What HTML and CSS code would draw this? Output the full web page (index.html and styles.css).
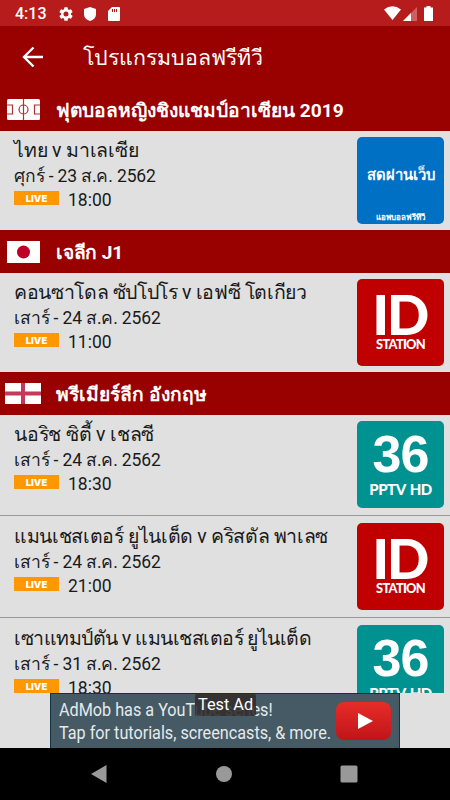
FILE: index.html
```html
<!DOCTYPE html>
<html lang="th">
<head>
<meta charset="utf-8">
<title>โปรแกรมบอลฟรีทีวี</title>
<link rel="stylesheet" href="styles.css">
</head>
<body>
<div class="screen">
  <header class="status">
    <span class="clock">4:13</span>
    <svg class="gear" viewBox="2 2 20 20"><path fill="#fff" d="M19.14 12.94c.04-.3.06-.61.06-.94s-.02-.64-.07-.94l2.03-1.58a.5.5 0 0 0 .12-.61l-1.92-3.32a.5.5 0 0 0-.59-.22l-2.39.96a7 7 0 0 0-1.62-.94l-.36-2.54a.5.5 0 0 0-.48-.41h-3.84a.5.5 0 0 0-.47.41l-.36 2.54a7 7 0 0 0-1.62.94l-2.39-.96a.5.5 0 0 0-.59.22L2.74 8.87a.5.5 0 0 0 .12.61l2.03 1.58a6 6 0 0 0 0 1.88l-2.03 1.58a.5.5 0 0 0-.12.61l1.92 3.32c.12.22.37.29.59.22l2.39-.96c.5.38 1.03.7 1.62.94l.36 2.54c.05.24.24.41.48.41h3.84c.24 0 .44-.17.47-.41l.36-2.54a7 7 0 0 0 1.62-.94l2.39.96c.22.08.47 0 .59-.22l1.92-3.32a.5.5 0 0 0-.12-.61zM12 15.6a3.6 3.6 0 1 1 0-7.2 3.6 3.6 0 0 1 0 7.2z"/></svg>
    <svg class="shield" viewBox="0 0 12 14"><path fill="#fff" d="M6 0l6 2v5c0 3.500-2.500 6-6 7-3.500-1-6-3.500-6-7V2z"/></svg>
    <svg class="sd" viewBox="0 0 12 14"><path fill="#fff" d="M4 0h7a1 1 0 0 1 1 1v12a1 1 0 0 1-1 1H1a1 1 0 0 1-1-1V4z"/><path stroke="#b71c1c" stroke-width="1" d="M4.500 2v3M6.500 2v3M8.500 2v3"/></svg>
    <svg class="signals" viewBox="0 0 50 15"><path fill="#fff" d="M0 3.500Q8.500-2.800 17 3.500L8.500 14z"/><path fill="#fff" fill-opacity=".3" d="M19 15L33 1v14z"/><path fill="#fff" d="M19 15l8-8v8z"/><path fill="#fff" d="M42.500 0h4v1.500H49V15h-9V1.500h2.500z"/></svg>
  </header>
  <nav class="appbar">
    <svg class="back" viewBox="0 0 22 22"><path d="M21 11H2M11.500 1.500L2 11l9.500 9.500" fill="none" stroke="#fff" stroke-width="2.400"/></svg>
    <h1>โปรแกรมบอลฟรีทีวี</h1>
  </nav>
  <main class="list">
    <h2 class="league"><svg class="flag pitch" viewBox="0 0 33 21"><rect width="33" height="21" rx="1.500" fill="#fff"/><g fill="none" stroke="#a33" stroke-width="1.200"><path d="M16.500 0v21M0 6h5.500v9H0M33 6h-5.500v9H33"/><circle cx="16.500" cy="10.500" r="4.500"/></g></svg><span class="l1">ฟุตบอลหญิงชิงแชมป์อาเซียน 2019</span></h2>
    <article class="match"><div class="info"><h3 class="t1">ไทย v มาเลเซีย</h3><p class="date">ศุกร์ - 23 ส.ค. 2562</p><p class="time"><b class="live">LIVE</b>18:00</p></div><div class="tv web"><b>สดผ่านเว็บ</b><small>แอพบอลฟรีทีวี</small></div></article>

    <h2 class="league"><svg class="flag" viewBox="0 0 33 22"><rect width="33" height="22" fill="#fff"/><circle cx="16.500" cy="11" r="6.500" fill="#be0029"/></svg><span class="l2">เจลีก J1</span></h2>
    <article class="match"><div class="info"><h3 class="t2">คอนซาโดล ซัปโปโร v เอฟซี โตเกียว</h3><p class="date">เสาร์ - 24 ส.ค. 2562</p><p class="time"><b class="live">LIVE</b>11:00</p></div><div class="tv id"><b>ID</b><small>STATION</small></div></article>

    <h2 class="league"><svg class="flag england" viewBox="0 0 36 21"><rect width="36" height="21" fill="#fff"/><path d="M18 0v21M0 10.500h36" stroke="#c8385a" stroke-width="4"/></svg><span class="l3">พรีเมียร์ลีก อังกฤษ</span></h2>
    <article class="match ruled"><div class="info"><h3 class="t3">นอริช ซิตี้ v เชลซี</h3><p class="date">เสาร์ - 24 ส.ค. 2562</p><p class="time"><b class="live">LIVE</b>18:30</p></div><div class="tv pptv"><b>36</b><small>PPTV HD</small></div></article>
    <article class="match ruled"><div class="info"><h3 class="t4">แมนเชสเตอร์ ยูไนเต็ด v คริสตัล พาเลซ</h3><p class="date">เสาร์ - 24 ส.ค. 2562</p><p class="time"><b class="live">LIVE</b>21:00</p></div><div class="tv id"><b>ID</b><small>STATION</small></div></article>
    <article class="match"><div class="info"><h3 class="t5">เซาแทมป์ตัน v แมนเชสเตอร์ ยูไนเต็ด</h3><p class="date">เสาร์ - 31 ส.ค. 2562</p><p class="time"><b class="live">LIVE</b>18:30</p></div><div class="tv pptv"><b>36</b><small>PPTV HD</small></div></article>
  </main>
  <aside class="adbar">
    <div class="ad">
      <p>AdMob has a YouTube series!<br>Tap for tutorials, screencasts, &amp; more.</p>
      <svg class="play" viewBox="0 0 55 38"><defs><linearGradient id="red" x2="0" y2="1"><stop stop-color="#e62d28"/><stop offset="1" stop-color="#c01419"/></linearGradient></defs><rect width="55" height="38" rx="8" fill="url(#red)"/><path fill="#fff" d="M22 11v16l15-8z"/></svg>
      <span class="tag">Test Ad</span>
    </div>
  </aside>
  <footer class="navbar">
    <svg viewBox="0 0 18 18"><path d="M16.500 0v18L1 9z"/></svg>
    <svg viewBox="0 0 18 18"><circle cx="9" cy="9" r="8"/></svg>
    <svg viewBox="0 0 18 18"><rect x=".5" y=".5" width="17" height="17" rx="1.500"/></svg>
  </footer>
</div>
</body>
</html>
```
FILE: styles.css
```css
* { box-sizing: border-box; margin: 0; padding: 0; }
body { width: 450px; height: 800px; overflow: hidden; font-family: Roboto, sans-serif; color: #1a1a1a; background: #000; }
svg { display: block; flex: none; }
.screen { display: flex; flex-direction: column; height: 800px; }
.status { height: 26px; background: #b71c1c; display: flex; align-items: center; padding: 1px 16px 0 15px; flex: none; }
.clock { color: #fff; font-size: 16px; font-weight: 500; line-height: 26px; width: 44px; white-space: nowrap; }
.gear { width: 14px; height: 14px; }
.shield { width: 12px; height: 14px; margin-left: 11px; }
.sd { width: 12px; height: 14px; margin-left: 12px; }
.signals { width: 50px; height: 15px; margin-left: auto; }
.appbar { height: 62px; background: #900; color: #fff; display: flex; align-items: center; padding-left: 22px; flex: none; }
.back { width: 22px; height: 22px; }
h1 { margin: 1px 0 0 39px; font-size: 21.4px; font-weight: 400; line-height: 30px; white-space: nowrap; }
.list { flex: 1; min-height: 0; overflow: hidden; background: #e0e0e0; }
.league { height: 43px; background: #900; color: #fff; display: grid; grid-template-columns: 46px 1fr; justify-items: center; align-items: center; font-size: 19.2px; font-weight: 700; line-height: 26px; white-space: nowrap; }
.league span { justify-self: start; margin: 2px 0 0 10px; }
.league .l2 { letter-spacing: -.2px; }
.flag { width: 33px; height: 22px; }
.pitch { height: 21px; }
.england { width: 36px; height: 21px; }
.match { height: 99px; display: flex; padding: 6px 6px 0 14px; }
.ruled { height: 102px; background: linear-gradient(#999, #999) 0 100px / 100% 1px no-repeat; }
.info { flex: 1; min-width: 0; }
h3 { font-size: 19.5px; font-weight: 400; line-height: 27px; height: 27px; white-space: nowrap; }
.t1 { letter-spacing: -.2px; }
.t2 { letter-spacing: -.35px; }
.t5 { letter-spacing: -.5px; }
.t3 { letter-spacing: -.2px; }
.t4 { letter-spacing: -.35px; }
.date { font-size: 17.5px; line-height: 24px; height: 24px; white-space: nowrap; letter-spacing: -.15px; }
.time { font-size: 17.5px; line-height: 24px; display: flex; }
.live { width: 45px; height: 14px; margin: 3px 9px 0 0; background: #ff9800; color: #fff; font: 900 9.500px/15px Inter, sans-serif; text-align: center; }
.tv { width: 87px; height: 87px; border-radius: 5px; color: #fff; display: flex; flex-direction: column; align-items: center; flex: none; white-space: nowrap; overflow: hidden; }
.web { background: #0070c4; }
.web b { font-size: 14.8px; line-height: 22px; margin-top: 27px; }
.web small { font-size: 8px; font-weight: 700; line-height: 12px; margin-top: 26px; }
.id { background: #c00000; }
.id b { font: 900 56px/56px Lato, sans-serif; letter-spacing: -2.500px; margin: 7px 0 0 -2px; }
.id small { font: 900 12.8px/14px Lato, sans-serif; letter-spacing: -.7px; margin-top: -5px; }
.pptv { background: #009290; }
.pptv b { font: 700 52px/52px "Liberation Sans", sans-serif; letter-spacing: -1px; margin-top: 7px; }
.pptv small { font: 900 15px/18px Lato, sans-serif; letter-spacing: -.5px; word-spacing: 1.500px; }
.adbar { height: 55px; background: #e0e0e0; display: flex; justify-content: center; flex: none; }
.ad { position: relative; width: 350px; height: 55px; background: #455a64; border: 1px solid #0e3446; border-bottom: 0; color: #e6eaec; display: flex; justify-content: space-between; align-items: center; padding: 0 8px; }
.ad p { font-size: 18px; line-height: 23px; width: 272px; white-space: nowrap; transform: scaleX(.9); transform-origin: 0 50%; }
.play { width: 55px; height: 38px; }
.tag { position: absolute; left: 144px; top: 0; height: 22px; padding: 0 3px; background: rgba(50, 45, 45, .9); color: #fff; font-size: 16.3px; line-height: 22px; white-space: nowrap; border-radius: 2px; }
.navbar { height: 52px; background: #000; display: flex; justify-content: space-between; align-items: center; padding: 0 92px 0 90px; flex: none; }
.navbar svg { width: 18px; height: 18px; fill: #999; }
```
